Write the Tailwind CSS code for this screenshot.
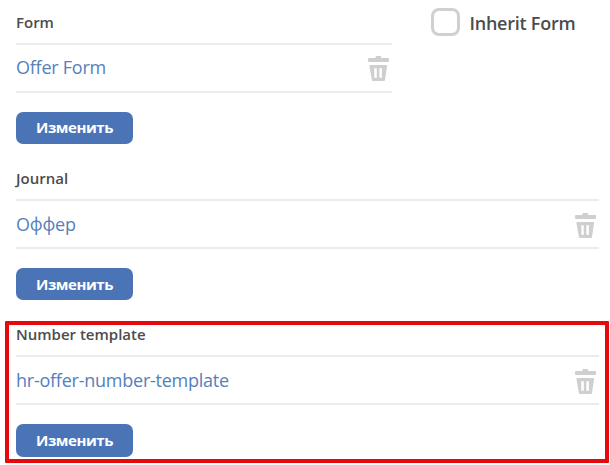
<!DOCTYPE html>
<html lang="ru">
<head>
<meta charset="utf-8">
<title>Form settings</title>
<script src="https://cdn.jsdelivr.net/npm/@tailwindcss/browser@4"></script>
</head>
<body class="relative h-[465px] w-[610px] overflow-hidden bg-white font-['Open_Sans','Noto_Sans',sans-serif] text-[#4c4c4c]">
<svg class="hidden">
  <symbol id="trash" viewBox="0 0 21 25">
    <path fill="#cfcfcf" d="M1 2H7.5V1Q7.5 0 8.5 0H12.2Q13.2 0 13.2 1V2H20Q21 2 21 3V5Q21 6 20 6H1Q0 6 0 5V3Q0 2 1 2Z"/>
    <path fill="#cfcfcf" fill-rule="evenodd" d="M2.2 9H18.2Q19.3 9 19.1 10L17 24Q16.8 25 16 25H5Q4.1 25 3.9 24L1.4 10Q1.2 9 2.2 9ZM6.3 12.2V21.8H8.8V12.2ZM11.4 12.2V21.8H13.9V12.2Z"/>
  </symbol>
</svg>
<main class="flex flex-col pl-4">
  <div class="flex h-[156px] items-start gap-[38.5px]">
    <section class="w-[376px]">
      <h2 class="h-[43px] pt-[12px] text-[15px] leading-5 font-semibold">Form</h2>
      <div class="flex h-[50px] justify-between border-y-2 border-[#e8ecec] pr-[3px]">
        <a class="pt-[10px] text-[18px] leading-6 tracking-[-0.24px] text-[#5580bb]">Offer Form</a>
        <svg class="mt-[11px] h-[25px] w-[21px]"><use href="#trash"/></svg>
      </div>
      <button class="mt-[19px] block h-8 w-[117px] rounded-[7px] bg-[#4b74b6] pb-[2px] text-[15px] leading-[30px] font-bold tracking-[-0.45px] text-white">Изменить</button>
    </section>
    <label class="flex items-start gap-[10px] pt-2 text-[18px] font-semibold whitespace-nowrap">
      <span class="h-[28px] w-[29px] rounded-[8px] border-3 border-[#d0d0d0]"></span>
      <span class="pt-px leading-7 tracking-[-0.25px]">Inherit Form</span>
    </label>
  </div>
  <section class="h-[156px] w-[583px]">
    <h2 class="h-[43px] pt-[12px] text-[15px] leading-5 font-semibold">Journal</h2>
    <div class="flex h-[50px] justify-between border-y-2 border-[#e8ecec] pr-[3px]">
      <a class="pt-[11px] text-[18px] leading-6 tracking-[-0.24px] text-[#5580bb]">Оффер</a>
      <svg class="mt-[12px] h-[25px] w-[21px]"><use href="#trash"/></svg>
    </div>
    <button class="mt-[19px] block h-8 w-[117px] rounded-[7px] bg-[#4b74b6] text-[15px] leading-8 font-bold tracking-[-0.45px] text-white">Изменить</button>
  </section>
  <section class="w-[583px]">
    <h2 class="h-[43px] pt-[12px] text-[15px] leading-5 font-semibold">Number template</h2>
    <div class="flex h-[50px] justify-between border-y-2 border-[#e8ecec] pr-[3px]">
      <a class="pt-[11px] text-[18px] leading-6 tracking-[-0.24px] text-[#5580bb]">hr-offer-number-template</a>
      <svg class="mt-[12px] h-[25px] w-[21px]"><use href="#trash"/></svg>
    </div>
    <button class="mt-[19px] block h-[33px] w-[117px] rounded-[7px] bg-[#4b74b6] pb-px text-[15px] leading-8 font-bold tracking-[-0.45px] text-white">Изменить</button>
  </section>
</main>
<div class="absolute top-[321px] left-[5px] h-[142px] w-[604px] rounded-[1px] border-4 border-[#e8080b]"></div>
</body>
</html>
